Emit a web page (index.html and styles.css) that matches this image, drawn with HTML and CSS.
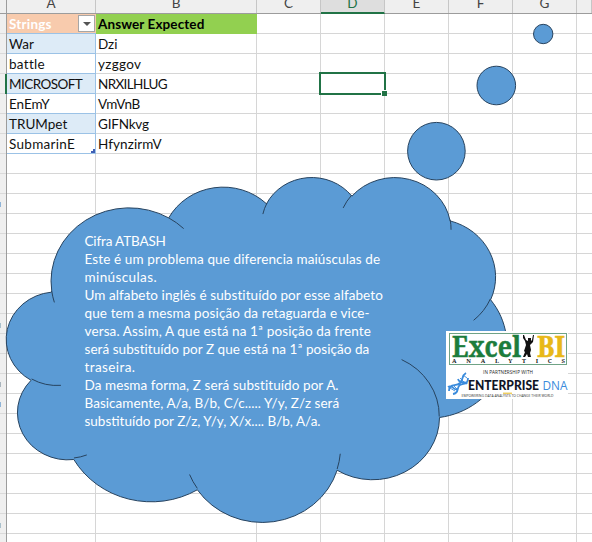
FILE: index.html
```html
<!DOCTYPE html>
<html lang="pt">
<head>
<meta charset="utf-8">
<title>Cifra ATBASH</title>
<link rel="stylesheet" href="styles.css">
</head>
<body>
<main class="workbook">
  <header class="columns">
    <span class="corner"></span><span>A</span><span>B</span><span>C</span><span class="active">D</span><span>E</span><span>F</span><span>G</span><span></span>
  </header>
  <div class="body">
    <aside class="rows"></aside>
    <section class="sheet">
      <div class="table">
        <div class="cell head-a"><span>Strings</span><button class="filter" aria-label="Filter"></button></div><div class="cell head-b">Answer Expected</div>
        <div class="cell band">War</div><div class="cell">Dzi</div>
        <div class="cell plain wide">battle</div><div class="cell wide">yzggov</div>
        <div class="cell band tight">MICROSOFT</div><div class="cell tighter">NRXILHLUG</div>
        <div class="cell plain">EnEmY</div><div class="cell snug">VmVnB</div>
        <div class="cell band">TRUMpet</div><div class="cell snug">GIFNkvg</div>
        <div class="cell plain wide last">SubmarinE</div><div class="cell loose">HfynzirmV</div>
      </div>
    </section>
  </div>
  <div class="row-mark"></div>
  <div class="selection"><i></i></div>
  <svg class="drawing" width="592" height="542" viewBox="0 0 592 542">
    <circle cx="543.2" cy="34" r="9.7"/>
    <circle cx="496.3" cy="85.5" r="19.3"/>
    <circle cx="436.4" cy="151.2" r="28.8"/>
    <path id="cloud"/>
    <path id="folds"/>
  </svg>
  <div class="note">
    <p class="caps">Cifra ATBASH</p>
    <p>Este é um problema que diferencia maiúsculas de</p>
    <p class="open">minúsculas.</p>
    <p class="even">Um alfabeto inglês é substituído por esse alfabeto</p>
    <p>que tem a mesma posição da retaguarda e vice-</p>
    <p>versa. Assim, A que está na 1ª posição da frente</p>
    <p class="narrow">será substituído por Z que está na 1ª posição da</p>
    <p class="open">traseira.</p>
    <p class="even">Da mesma forma, Z será substituído por A.</p>
    <p class="narrow">Basicamente, A/a, B/b, C/c..... Y/y, Z/z será</p>
    <p class="zero">substituído por Z/z, Y/y, X/x.... B/b, A/a.</p>
  </div>
  <svg class="logo" width="122" height="68" viewBox="446 331 122 68">
    <rect x="446" y="331" width="122" height="68" fill="#fff"/>
    <rect x="449.5" y="333.5" width="117" height="31" fill="none" stroke="#6fa386"/>
    <text class="slab" x="452" y="356.5" font-size="28" textLength="69" lengthAdjust="spacingAndGlyphs" fill="#1c7c3c" stroke="#1c7c3c" stroke-width=".5">Excel</text>
    <text class="slab" x="537" y="356.5" font-size="28" textLength="28" lengthAdjust="spacingAndGlyphs" fill="#e8b818" stroke="#e8b818" stroke-width=".5">BI</text>
    <path fill="#111" d="M523 335l1 0 2 5 2 1 0-3 3 0 0 3 1-1 1-5 1 0-1 7-3 3 1 5-1 3 1 4-3 0-1-3-2 3-2 0 2-5-1-1 2-6-1-4-2-3z"/>
    <text class="slab" x="452" y="363" font-size="6" textLength="113" fill="#222">ANALYTICS</text>
    <text class="sans" x="483" y="374.2" font-size="4.6" textLength="50" fill="#222">IN PARTNERSHIP WITH</text>
    <g fill="none" stroke="#3a8bdc" stroke-width="1.8"><path d="M449 391c0-8 7-4 11-8s1-7 6-10M453 394c7-1 3-7 7-9s8 0 8-7M448 387c4-3 6 4 9 2M458 379c2 6 7 1 9 5"/><path stroke-width=".9" d="M450 388l5 3M453 385l4 4M460 378l5 5M463 375l4 3"/></g>
    <text class="bold" x="468" y="389.8" font-size="12.5" textLength="71" lengthAdjust="spacingAndGlyphs" fill="#101525">ENTERPRISE</text>
    <text class="sans" x="542.5" y="389.8" font-size="12.5" textLength="25" lengthAdjust="spacingAndGlyphs" fill="#3a8bdc">DNA</text>
    <path d="M503 393.2h9" stroke="#e8b818"/>
    <text class="sans" x="461.5" y="397.4" font-size="3.4" textLength="92" lengthAdjust="spacingAndGlyphs" fill="#333">EMPOWERING DATA ANALYSTS TO CHANGE THEIR WORLD</text>
  </svg>
</main>
<script src="cloud.js"></script>
</body>
</html>
```
FILE: styles.css
```css
* { box-sizing: border-box; }
body { margin: 0; background: #fff; }
p { margin: 0; }
.workbook {
  position: relative;
  width: 592px;
  height: 542px;
  overflow: hidden;
  font-family: Lato, "Liberation Sans", sans-serif;
  font-size: 13.5px;
  color: #111;
}
.columns {
  display: grid;
  grid-template-columns: 7px 89px 161px repeat(5, 64px) 15px;
  height: 14px;
  background: #efefef;
  border-bottom: 1px solid #9c9c9c;
}
.columns span {
  display: flex;
  justify-content: center;
  align-items: flex-end;
  height: 13px;
  line-height: 19px;
  overflow: hidden;
  border-right: 1px solid #c6c6c6;
  color: #444;
}
.columns .corner { border-color: #9c9c9c; }
.columns .active { height: 14px; line-height: 17px; background: #dedede; color: #217346; border-bottom: 2px solid #217346; }
.body { display: flex; height: 528px; }
.rows {
  width: 7px;
  background:
    linear-gradient(#8fb4d8, #8fb4d8) 0 188px / 1px 5px no-repeat,
    linear-gradient(#a9c0cc, #a9c0cc) 0 309px / 1px 5px no-repeat,
    linear-gradient(#a9b4bc, #a9b4bc) 0 368px / 1px 5px no-repeat,
    linear-gradient(#8fb4d8, #8fb4d8) 0 388px / 1px 5px no-repeat,
    linear-gradient(#a9c0cc, #a9c0cc) 0 509px / 1px 5px no-repeat,
    repeating-linear-gradient(to bottom, #efefef 0 19px, #dadada 19px 20px);
  border-right: 1px solid #9c9c9c;
}
.sheet {
  flex: 1;
  background:
    repeating-linear-gradient(to bottom, transparent 0 19px, #d6d6d6 19px 20px),
    repeating-linear-gradient(to right, transparent 0 63px, #d6d6d6 63px 64px) 250px 0 / 335px 100% no-repeat,
    linear-gradient(#d6d6d6, #d6d6d6) 249px 0 / 1px 100% no-repeat,
    linear-gradient(#d6d6d6, #d6d6d6) 88px 0 / 1px 100% no-repeat;
}
.table { display: grid; grid-template-columns: 89px 161px; grid-auto-rows: 20px; }
.cell { padding-left: 2px; line-height: 20px; white-space: nowrap; overflow: hidden; }
.wide { letter-spacing: 0.3px; }
.loose { letter-spacing: 0.1px; }
.snug { letter-spacing: -0.2px; }
.tight { letter-spacing: -0.55px; }
.tighter { letter-spacing: -0.65px; }
.band { background: #ddebf7; border-bottom: 1px solid #9bc2e6; border-right: 1px solid #9bc2e6; }
.plain { border-bottom: 1px solid #9bc2e6; border-right: 1px solid #9bc2e6; }
.head-a { display: flex; justify-content: space-between; background: #f8cbad; color: #fff; font-weight: bold; letter-spacing: 0.2px; border-bottom: 1px solid #9bc2e6; }
.head-b { background: #92d050; font-weight: bold; letter-spacing: 0.1px; color: #000; }
.filter { position: relative; width: 17px; height: 17px; margin: 1px 1px 0 0; padding: 0; border: 1px solid #a6a6a6; background: #fff; }
.filter::after { content: ""; position: absolute; left: 4px; top: 6px; border: 4px solid transparent; border-top-color: #555; border-bottom: 0; }
.last { position: relative; }
.last::after { content: ""; position: absolute; right: 0; bottom: 0; width: 4px; height: 4px; background: #3f5fb5; clip-path: polygon(100% 0, 100% 100%, 0 100%, 0 50%, 50% 50%, 50% 0); }
.row-mark { position: absolute; left: 5px; top: 74px; width: 2px; height: 20px; background: #217346; }
.selection { position: absolute; left: 319px; top: 72px; width: 67px; height: 23px; border: 2px solid #217346; }
.selection i { position: absolute; right: -3px; bottom: -3px; width: 6px; height: 6px; background: #217346; border: solid #fff; border-width: 1px 0 0 1px; }
.drawing { position: absolute; left: 0; top: 0; fill: #5b9bd5; stroke: #27435f; stroke-width: 1; }
#folds { fill: none; }
.note { position: absolute; left: 84.5px; top: 233px; color: #fff; line-height: 17.95px; letter-spacing: 0.12px; white-space: nowrap; }
.note .caps { letter-spacing: -0.15px; }
.note .open { letter-spacing: 0.4px; }
.note .even { letter-spacing: 0.08px; }
.note .narrow { letter-spacing: 0.05px; }
.note .zero { letter-spacing: 0; }
.logo { position: absolute; left: 446px; top: 331px; }
.slab { font-family: "Noto Serif", "DejaVu Serif", serif; font-weight: bold; }
.sans { font-family: "Open Sans", sans-serif; }
.bold { font-family: Lato, sans-serif; font-weight: 900; }
```
FILE: cloud.js
```js
// Cloud outline as elliptical arcs on a 43200-unit square: [rx, ry, start, sweep], angles in 1/60000 degree.
const box = { x: 6.6, y: 176.4, w: 500, h: 344.8 };
const outline = [
  [6753, 9190, -11429249, 7426832], [5333, 7267, -8646143, 5396714],
  [4365, 5945, -8748475, 5983381], [4857, 6595, -7859164, 7034504],
  [5333, 7273, -4722533, 6541615], [6775, 9220, -2776035, 7816140],
  [5785, 7867, 37501, 6842000], [6752, 9215, 1347096, 6910353],
  [7720, 10543, 3974558, 4542661], [4360, 5918, -16496525, 8804134],
  [4345, 5945, -14809710, 9151131]
];
const folds = [
  [4693, 26177, 4345, 5945, 5204520, 1585770], [6928, 34899, 4360, 5918, 4416628, 686848],
  [16478, 39090, 6752, 9215, 8257449, 844866], [28827, 34751, 6752, 9215, 387196, 959901],
  [34129, 22954, 5785, 7867, -4217541, 4255042], [41798, 15354, 5333, 7273, 1819082, 1665090],
  [38324, 5426, 4857, 6595, -824660, 891534], [29078, 3952, 4857, 6595, -8950887, 1091722],
  [22141, 4720, 4365, 5945, -9809656, 1061181], [14000, 5192, 6753, 9190, -4002417, 739161],
  [4127, 15789, 6753, 9190, 9459261, 711490]
];
const rad = a => a / 60000 * Math.PI / 180;
const param = (a, rx, ry) => Math.atan2(rx * Math.sin(a), ry * Math.cos(a));
const sx = box.w / 43200, sy = box.h / 43200;
const pt = (x, y) => (box.x + x * sx).toFixed(2) + " " + (box.y + y * sy).toFixed(2);
function arc(p, [rx, ry, start, sweep]) {
  const t0 = param(rad(start), rx, ry), t1 = param(rad(start + sweep), rx, ry);
  const cx = p.x - rx * Math.cos(t0), cy = p.y - ry * Math.sin(t0);
  p.x = cx + rx * Math.cos(t1);
  p.y = cy + ry * Math.sin(t1);
  const large = sweep > 10800000 ? 1 : 0;
  return `A${rx * sx} ${ry * sy} 0 ${large} 1 ${pt(p.x, p.y)}`;
}
const p = { x: 3900, y: 14370 };
document.getElementById("cloud").setAttribute("d", "M" + pt(p.x, p.y) + outline.map(a => arc(p, a)).join("") + "Z");
document.getElementById("folds").setAttribute("d", folds.map(([x, y, ...a]) => "M" + pt(x, y) + arc({ x, y }, a)).join(""));
```
